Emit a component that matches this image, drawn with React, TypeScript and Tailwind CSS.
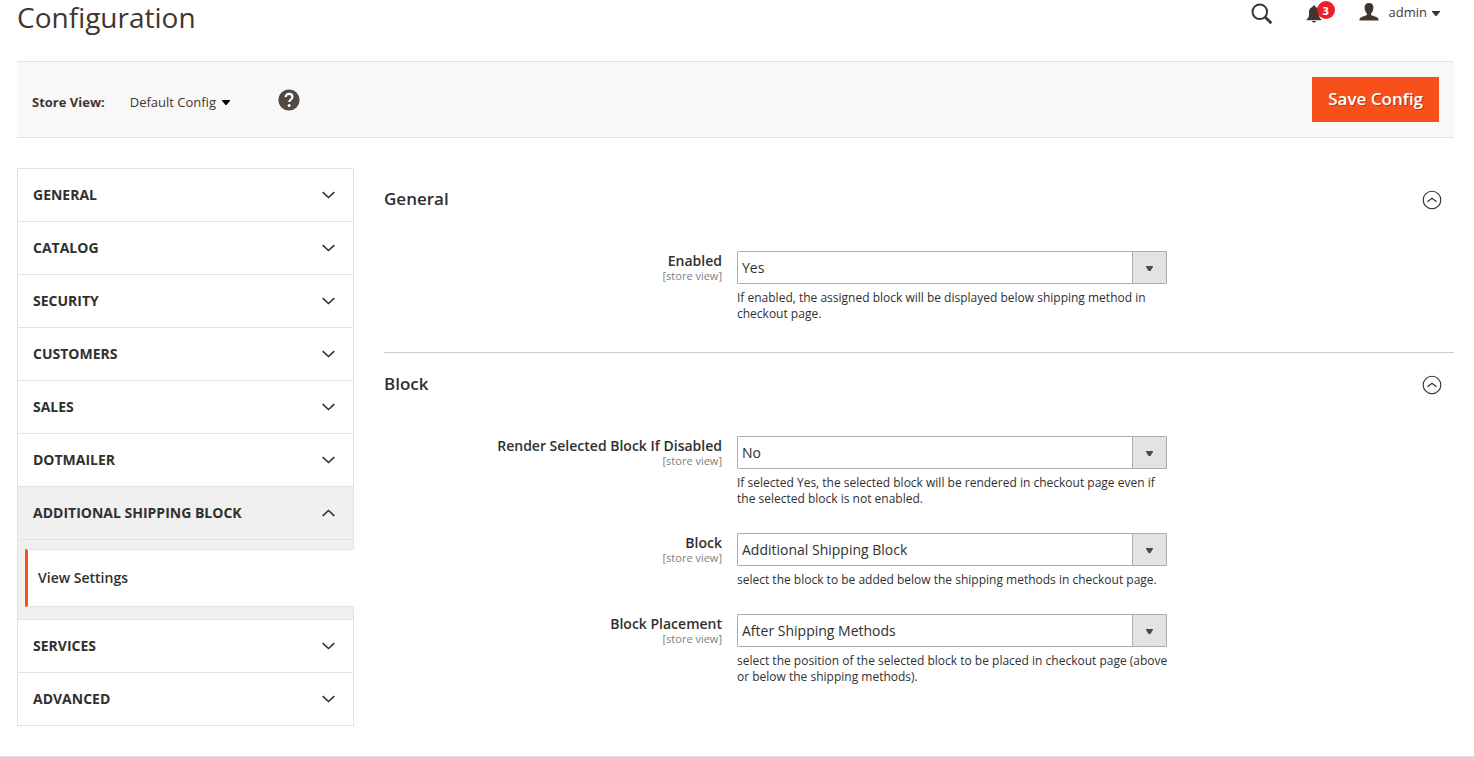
import { useState } from 'react';

type Field = { id: string; label: string; options: string[]; value: string; note: string };
type Section = { title: string; fields: Field[] };

const navItems = [
  'General',
  'Catalog',
  'Security',
  'Customers',
  'Sales',
  'Dotmailer',
  'Additional Shipping Block',
  'Services',
  'Advanced',
];

const sections: Section[] = [
  {
    title: 'General',
    fields: [
      {
        id: 'enabled',
        label: 'Enabled',
        options: ['Yes', 'No'],
        value: 'Yes',
        note: 'If enabled, the assigned block will be displayed below shipping method in checkout page.',
      },
    ],
  },
  {
    title: 'Block',
    fields: [
      {
        id: 'render-disabled',
        label: 'Render Selected Block If Disabled',
        options: ['Yes', 'No'],
        value: 'No',
        note: 'If selected Yes, the selected block will be rendered in checkout page even if the selected block is not enabled.',
      },
      {
        id: 'block',
        label: 'Block',
        options: ['Additional Shipping Block'],
        value: 'Additional Shipping Block',
        note: 'select the block to be added below the shipping methods in checkout page.',
      },
      {
        id: 'placement',
        label: 'Block Placement',
        options: ['Before Shipping Methods', 'After Shipping Methods'],
        value: 'After Shipping Methods',
        note: 'select the position of the selected block to be placed in checkout page (above or below the shipping methods).',
      },
    ],
  },
];

function Caret() {
  return (
    <svg width="8" height="5" viewBox="0 0 8 5" fill="currentColor" aria-hidden="true">
      <path d="M0 0h8v.8L4.500 5h-1L0 .8z" />
    </svg>
  );
}

function SelectArrow() {
  return (
    <svg width="7" height="5" viewBox="0 0 7 5" fill="currentColor" aria-hidden="true">
      <path d="M0 0h7v.8L4.500 5h-2L0 .8z" />
    </svg>
  );
}

function Chevron({ up }: { up?: boolean }) {
  return (
    <svg width="13" height="8" viewBox="0 0 13 8" fill="none" stroke="currentColor" strokeWidth="1.6" aria-hidden="true">
      <path d={up ? 'M0.700 6.800L6.500 1.500L12.300 6.800' : 'M0.700 1.200L6.500 6.500L12.300 1.200'} />
    </svg>
  );
}

function Header() {
  return (
    <header className="flex items-start justify-between pb-[27px]">
      <h1 className="text-[28px] leading-[34px] text-[#41362f]">Configuration</h1>
      <div className="flex h-6 items-center pr-3.5 text-[#41362f]">
        <button type="button" aria-label="Search" className="pt-1">
          <svg width="22" height="22" viewBox="0 0 22 22" fill="none" stroke="currentColor">
            <circle cx="8.800" cy="8.800" r="7.300" strokeWidth="2" />
            <path d="M14 14l6.400 6.200" strokeWidth="2.800" />
          </svg>
        </button>
        <button type="button" aria-label="Notifications" className="relative ml-[33px] pt-1">
          <svg width="16" height="18" viewBox="0 0 16 18" fill="currentColor">
            <path d="M8 0.500c.9 0 1.500.5 1.500 1.400C11.800 2.600 13 4.400 13 7v2.500c0 2.200.8 3.600 2.500 5V15.300H.5V14.500c1.700-1.400 2.500-2.800 2.500-5V7c0-2.600 1.200-4.400 3.500-5.100C6.500 1 7.100.5 8 .5z" />
            <path d="M6 16h4c-.3 1-1.100 1.600-2 1.600S6.300 17 6 16z" />
          </svg>
          <span className="absolute top-0 left-[11px] flex size-[18px] items-center justify-center rounded-full bg-[#eb202b] text-[11px] leading-none font-bold text-white">
            3
          </span>
        </button>
        <button type="button" className="ml-[37px] flex items-center text-[13px] leading-5">
          <svg width="20" height="18" viewBox="0 0 20 18" fill="currentColor" aria-hidden="true">
            <path d="M10 0c2.800 0 4.400 1.700 4.400 4.500 0 2.600-.9 4.700-2.300 5.900v1.400c.5.700 1.600 1 3.200 1.500 3 .9 4.200 1.700 4.200 3.300V17.500H.5V16.600c0-1.600 1.200-2.400 4.200-3.300 1.600-.5 2.700-.8 3.200-1.500V10.400C6.500 9.200 5.600 7.100 5.600 4.500 5.600 1.700 7.200 0 10 0z" />
          </svg>
          <span className="mr-[5px] ml-2.5">admin</span>
          <span className="pt-0.5">
            <Caret />
          </span>
        </button>
      </div>
    </header>
  );
}

function Toolbar() {
  return (
    <div className="flex items-center justify-between border-y border-[#e3e3e3] bg-[#f8f8f8] p-[15px]">
      <div className="flex items-center text-[13px] leading-5 text-[#41362f]">
        <span id="store-label" className="pt-1 font-bold">
          Store View:
        </span>
        <button type="button" aria-describedby="store-label" className="ml-[25px] flex items-center gap-1.5 pt-1">
          Default Config
          <span className="pt-0.5 text-black">
            <Caret />
          </span>
        </button>
        <a href="#help" aria-label="What is this?" className="ml-12 text-[#514943]">
          <svg width="22" height="22" viewBox="0 0 22 22" fill="none">
            <circle cx="11" cy="11" r="10.600" fill="currentColor" />
            <path
              d="M7.700 8.100C7.700 6 9 4.900 11 4.900s3.400 1.200 3.400 3c0 2.500-3.200 2.700-3.200 5.200"
              stroke="#fff"
              strokeWidth="2.200"
            />
            <circle cx="11.100" cy="16.500" r="1.500" fill="#fff" />
          </svg>
        </a>
      </div>
      <button
        type="button"
        className="bg-[#f8501b] px-4 pt-[9px] pb-[11px] text-[17px] leading-[25px] font-semibold text-white [text-shadow:1px_1px_0_rgba(0,0,0,0.3)]"
      >
        Save Config
      </button>
    </div>
  );
}

function Sidebar() {
  const active = 'Additional Shipping Block';
  return (
    <nav aria-label="Configuration sections" className="border border-b-0 border-[#e3e3e3] text-[14px] leading-5 text-[#303030]">
      {navItems.map((item) => (
        <div key={item}>
          <button
            type="button"
            aria-expanded={item === active}
            className={`flex w-full items-center justify-between border-b border-[#e3e3e3] py-4 pr-[18px] pl-[15px] font-bold uppercase ${
              item === active ? 'bg-[#f0f0f0]' : 'bg-white'
            }`}
          >
            {item}
            <Chevron up={item === active} />
          </button>
          {item === active && (
            <div className="border-b border-[#e3e3e3] bg-[#f0f0f0] pt-[9px] pb-3 pl-[7px]">
              <a
                href="#view-settings"
                className="relative -mr-px block border-y border-l-3 border-y-[#e3e3e3] border-l-[#f8501b] bg-white py-[18px] pl-[10px] font-semibold"
              >
                View Settings
              </a>
            </div>
          )}
        </div>
      ))}
    </nav>
  );
}

function FieldRow({ field }: { field: Field }) {
  const [value, setValue] = useState(field.value);
  return (
    <div className="grid grid-cols-[353fr_430fr_287fr]">
      <label htmlFor={field.id} className="pr-[15px] text-right text-[14px] leading-5 font-semibold text-[#303030]">
        {field.label}
        <span className="block text-[11px] leading-[9px] font-normal text-[#808080]">[store view]</span>
      </label>
      <div>
        <div className="relative">
          <select
            id={field.id}
            value={value}
            onChange={(e) => setValue(e.target.value)}
            className="block h-[33px] w-full appearance-none rounded-[1px] border border-[#adadad] bg-white pr-10 pl-1 text-[14px] leading-5 text-[#303030]"
          >
            {field.options.map((o) => (
              <option key={o}>{o}</option>
            ))}
          </select>
          <span className="pointer-events-none absolute inset-y-0 right-0 flex w-[35px] items-center justify-center rounded-r-[1px] border border-[#adadad] bg-[#e3e3e3] pt-px text-[#514943]">
            <SelectArrow />
          </span>
        </div>
        <p className="-mr-1 pt-1.5 text-[12px] leading-4 text-[#303030]">{field.note}</p>
      </div>
    </div>
  );
}

function ConfigSection({ section, last }: { section: Section; last: boolean }) {
  return (
    <section className={last ? '' : 'border-b border-[#cccccc] pb-[30px]'}>
      <h2>
        <button
          type="button"
          aria-expanded="true"
          className="flex w-full items-center justify-between pt-[19px] pr-3 text-left text-[17px] leading-6 font-semibold text-[#303030]"
        >
          {section.title}
          <svg width="20" height="20" viewBox="0 0 20 20" fill="none" stroke="currentColor" className="mt-0.5" aria-hidden="true">
            <circle cx="10" cy="10" r="8.800" strokeWidth="1.100" />
            <path d="M5.500 11.800L10 8.300l4.500 3.500" strokeWidth="1.200" />
          </svg>
        </button>
      </h2>
      <div className="flex flex-col gap-[26px] pt-10">
        {section.fields.map((f) => (
          <FieldRow key={f.id} field={f} />
        ))}
      </div>
    </section>
  );
}

export default function App() {
  return (
    <div className="bg-white font-['Open_Sans',sans-serif]">
      <div className="pr-5 pl-[17px]">
        <Header />
        <Toolbar />
        <main className="grid grid-cols-[337fr_1070fr] items-start gap-[30px] py-[30px]">
          <Sidebar />
          <div>
            {sections.map((s, i) => (
              <ConfigSection key={s.title} section={s} last={i === sections.length - 1} />
            ))}
          </div>
        </main>
      </div>
      <footer className="border-t border-[#e3e3e3]" />
    </div>
  );
}
